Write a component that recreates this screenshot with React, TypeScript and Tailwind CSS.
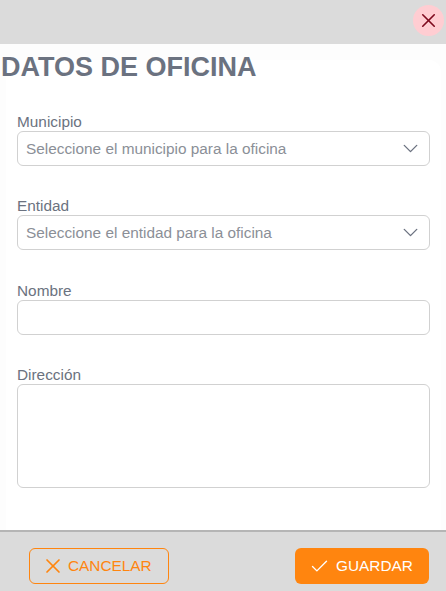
import { Check, ChevronDown, X } from 'lucide-react'

function Field({ label, children }: { label: string; children: React.ReactNode }) {
  return (
    <div>
      <label className="block text-[15.36px] leading-[19px] text-[#6b7280]">{label}</label>
      {children}
    </div>
  )
}

function SelectBox({ placeholder }: { placeholder: string }) {
  return (
    <div className="flex h-[35px] items-center justify-between rounded-md border border-[#d1d1d1] bg-white pl-2 pr-[6px]">
      <span className="text-[15.36px] text-[#8b8f97]">{placeholder}</span>
      <ChevronDown className="h-[25px] w-[25px] text-[#6b7280]" strokeWidth={1.3} />
    </div>
  )
}

export default function App() {
  return (
    <div className="flex h-[591px] w-[446px] flex-col overflow-hidden bg-white font-['Liberation_Sans',sans-serif]">
      {/* header */}
      <div className="flex h-[44px] shrink-0 items-start justify-end bg-[#dbdbdb] pr-[2px] pt-[5px]">
        <button className="flex h-[31px] w-[31px] items-center justify-center rounded-full bg-[#ffcdd2] text-[#7f0a1e]">
          <X className="h-[23px] w-[23px]" strokeWidth={1.7} />
        </button>
      </div>

      {/* body */}
      <div className="h-[486px] shrink-0 bg-[#fdfdfd] pt-[4px]">
        <h1 className="pl-[1px] text-[27px] font-bold leading-[38px] text-[#6b7280]">DATOS DE OFICINA</h1>
        <div className="ml-[6px] mr-[5px] -mt-[26px] h-[470px] rounded-t-xl bg-white pl-[11px] pr-[11px] pt-[52px]">
          <div className="flex flex-col gap-[30.33px]">
            <Field label="Municipio">
              <SelectBox placeholder="Seleccione el municipio para la oficina" />
            </Field>
            <Field label="Entidad">
              <SelectBox placeholder="Seleccione el entidad para la oficina" />
            </Field>
            <Field label="Nombre">
              <div className="h-[35px] rounded-md border border-[#d1d1d1] bg-white" />
            </Field>
            <Field label="Dirección">
              <div className="h-[104px] rounded-md border border-[#d1d1d1] bg-white" />
            </Field>
          </div>
        </div>
      </div>

      {/* footer */}
      <div className="flex h-[61px] shrink-0 items-start justify-between border-t-2 border-[#b5b5b5] bg-[#dbdbdb] pl-[29px] pr-[17px] pt-[16px]">
        <button className="flex h-[36px] w-[140px] items-center gap-[3px] rounded-md border border-[#ff850f] pl-[11px] text-[15.36px] text-[#ff850f]">
          <X className="h-[24px] w-[24px]" strokeWidth={1.7} />
          CANCELAR
        </button>
        <button className="flex h-[36px] w-[134px] items-center gap-[6px] rounded-md bg-[#ff850f] pl-[14px] text-[15.36px] text-white">
          <Check className="h-[21px] w-[21px]" strokeWidth={1.6} />
          GUARDAR
        </button>
      </div>
    </div>
  )
}
